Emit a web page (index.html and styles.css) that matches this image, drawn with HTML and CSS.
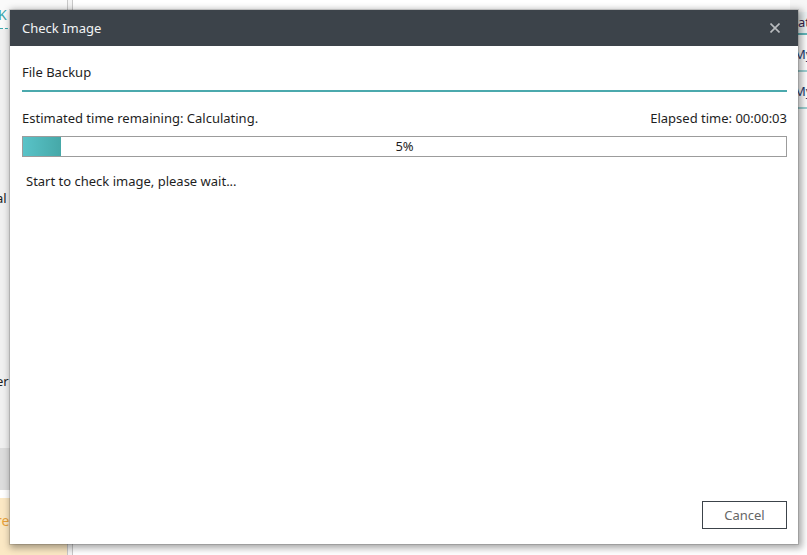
FILE: index.html
```html
<!DOCTYPE html>
<html>
<head>
<meta charset="utf-8">
<link rel="stylesheet" href="styles.css">
</head>
<body>
<div class="app">
  <div class="left">
    <div class="l-top"><span class="l-k">K</span></div>
    <div class="l-row l-r1"></div>
    <div class="l-row l-r2"><span>al</span></div>
    <div class="l-row l-r3"><span>er</span></div>
    <div class="l-band"></div>
    <div class="l-gap"></div>
    <div class="l-warn"><span>re</span></div>
  </div>
  <div class="sep"></div>
  <div class="center"></div>
  <div class="right">
    <div class="r-top"></div>
    <div class="r-head"><span>ati</span></div>
    <div class="r-row"><span>My</span></div>
    <div class="r-row"><span>My</span></div>
  </div>
</div>

<div class="dialog">
  <div class="titlebar">
    <span class="title">Check Image</span>
    <svg class="close" width="10" height="10" viewBox="0 0 10 10"><path d="M0.5 0.5 L9.5 9.5 M9.5 0.5 L0.5 9.5" stroke="#b9bcbf" stroke-width="1.6"/></svg>
  </div>
  <div class="content">
    <div class="section">File Backup</div>
    <div class="times">
      <span>Estimated time remaining: Calculating.</span>
      <span>Elapsed time: 00:00:03</span>
    </div>
    <div class="progress">
      <div class="fill" style="width:5%"></div>
      <span class="pct">5%</span>
    </div>
    <div class="status">Start to check image, please wait...</div>
    <div class="spacer"></div>
    <div class="actions"><button class="cancel">Cancel</button></div>
  </div>
</div>
</body>
</html>
```
FILE: styles.css
```css
html, body { margin: 0; padding: 0; }
body {
  width: 807px; height: 555px; overflow: hidden; position: relative;
  font-family: "Noto Sans", "Open Sans", sans-serif;
  background: #f4f4f4;
}
.app { display: flex; height: 555px; }
.left { width: 67px; display: flex; flex-direction: column; background: #f0f0f0; }
.l-top { height: 28px; border-bottom: 1px dashed #3aa7ad; background: #fafafa; position: relative; }
.l-k { color: #3aa7ad; font-size: 14px; margin-left: -2px; line-height: 30px; }
.l-row { color: #222; font-size: 13px; }
.l-r1 { height: 157px; }
.l-r2 { height: 180px; line-height: 24px; }
.l-r2 span, .l-r3 span { margin-left: -4px; }
.l-r3 { height: 82px; line-height: 30px; }
.l-band { height: 42px; background: #dcdcdc; }
.l-gap { height: 8px; background: #ffffff; }
.l-warn { flex: 1; background: #fbe8c4; color: #e8a23a; font-size: 14px; line-height: 46px; }
.l-warn span { margin-left: -4px; }
.sep { width: 4px; border-left: 1px solid #c8c8c8; border-right: 1px solid #c8c8c8; background: #f4f4f4; }
.center { flex: 1; background: #ffffff; }
.right { width: 17px; display: flex; flex-direction: column; background: #ffffff; }
.r-top { height: 12px; background: #f6f6f6; }
.r-head { height: 21px; border-bottom: 2px solid #62b9bd; font-size: 13px; color: #3a1f4e; line-height: 20px; background: #eef4f5; overflow: hidden; white-space: nowrap; }
.r-row { height: 35px; border-bottom: 2px solid #9fd3d5; font-size: 13px; color: #1c3b6e; line-height: 38px; overflow: hidden; white-space: nowrap; }
.r-head span { margin-left: 8px; }
.r-row span { margin-left: 4px; }

.dialog {
  position: absolute; left: 10px; top: 10px; width: 788px; height: 534px;
  background: #ffffff; display: flex; flex-direction: column;
  box-shadow: 0 0 0 1px rgba(0,0,0,0.12), 2px 2px 7px 2px rgba(0,0,0,0.35);
}
.titlebar {
  height: 36px; background: #3c434a; display: flex; align-items: center;
  justify-content: space-between; padding: 0 18px 0 12px;
}
.title { color: #f2f4f5; font-size: 13px; line-height: 38px; }
.close { display: block; }
.content { flex: 1; display: flex; flex-direction: column; padding: 0 11px 15px 12px; }
.section {
  height: 44px; line-height: 52px; font-size: 13px; color: #1e1e1e;
  border-bottom: 2px solid #4ba9ad; margin-bottom: 0;
}
.times {
  display: flex; justify-content: space-between; font-size: 13px; color: #1e1e1e;
  height: 44px; line-height: 52px;
}
.progress {
  position: relative; height: 19px; border: 1px solid #9c9c9c; background: #fff;
}
.fill { height: 19px; background: linear-gradient(90deg, #59c3c8, #46a8a8); }
.pct {
  position: absolute; left: 0; right: 0; top: 0; text-align: center;
  font-size: 13px; line-height: 19px; color: #1e1e1e;
}
.status { font-size: 13px; color: #1e1e1e; padding-left: 4px; margin-top: 14px; line-height: 20px; }
.spacer { flex: 1; }
.actions { display: flex; justify-content: flex-end; }
.cancel {
  width: 85px; height: 28px; border: 1px solid #3c434a; background: #fff;
  font-family: inherit; font-size: 13px; color: #666; padding: 0;
}
```
